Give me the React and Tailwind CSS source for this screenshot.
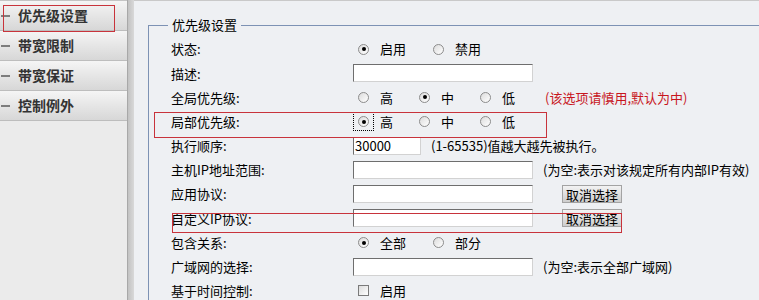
import React from "react";

const font = { fontFamily: '"Noto Sans CJK SC", "Noto Sans", sans-serif' };

const menu = ["优先级设置", "带宽限制", "带宽保证", "控制例外"];

const Radio = ({ checked, focus }) => (
  <span
    className={
      "flex h-[19px] w-[21px] shrink-0 items-center justify-center border border-dotted " +
      (focus ? "border-black" : "border-transparent")
    }
  >
    <span className="flex h-[11px] w-[11px] items-center justify-center rounded-full border border-[#8c8c8c] bg-linear-to-br from-[#dcdcdc] to-white">
      {checked && <span className="h-[4px] w-[4px] rounded-full bg-black" />}
    </span>
  </span>
);

const RadioGroup = ({ options, width }) => (
  <div className="flex items-center">
    {options.map((o) => (
      <div key={o.label} className={"flex items-center gap-[6px] " + width}>
        <Radio checked={o.checked} focus={o.focus} />
        <span>{o.label}</span>
      </div>
    ))}
  </div>
);

const TextInput = ({ w = "w-[180px]", value = "" }) => (
  <div
    className={
      "flex h-[18px] items-center border border-[#6e6e6e] border-r-[#d2d2d2] border-b-[#d2d2d2] bg-white pl-[1px] leading-none " +
      w
    }
  >
    {value}
  </div>
);

const ClearButton = () => (
  <div className="ml-[29px] flex h-[18px] w-[60px] items-center justify-center border border-[#a3a3a3] bg-linear-to-b from-[#f3f3f3] to-[#cdcdcd] leading-none">
    取消选择
  </div>
);

const Row = ({ label, children }) => (
  <div className="flex h-[24.2px] items-center">
    <div className="w-[182px] shrink-0">{label}</div>
    <div className="flex items-center">{children}</div>
  </div>
);

export default function App() {
  return (
    <div
      className="flex h-[300px] w-[759px] overflow-hidden bg-[#eef0f3] text-[13px] text-black"
      style={font}
    >
      {/* left menu */}
      <aside className="relative w-[128px] shrink-0 border-r border-[#a8a8a8] bg-[#ebebeb]">
        <div className="border-t border-[#c4c4c4]">
          {menu.map((m) => (
            <div
              key={m}
              className="flex h-[30px] items-center border-b border-[#bdbdbd] bg-linear-to-b from-[#f5f5f5] to-[#d7d7d7]"
            >
              <span className="ml-[1px] h-[2px] w-[9px] bg-[#7d7d7d]" />
              <span className="ml-[8px] text-[14px] font-bold text-[#333]">{m}</span>
            </div>
          ))}
        </div>
        <div className="absolute left-[3px] top-[5px] h-[27px] w-[112px] border-[1.5px] border-[#c8333b]" />
      </aside>

      <div className="w-[6px] shrink-0 bg-linear-to-r from-[#c2c2c2] to-[#d9d9d9]" />

      {/* content */}
      <main className="relative flex-1 border-t border-[#c9c9c9] pl-[14px] pt-[16px]">
        <fieldset className="w-[640px] border border-[#7d92b4] pb-4 pl-[19px] pt-[4px]">
          <legend className="px-[4px] leading-[16px]">优先级设置</legend>
          <div className="pl-[3px]">
            <Row label="状态:">
              <RadioGroup
                width="w-[75px]"
                options={[{ label: "启用", checked: true }, { label: "禁用" }]}
              />
            </Row>
            <Row label="描述:">
              <TextInput />
            </Row>
            <Row label="全局优先级:">
              <RadioGroup
                width="w-[61px]"
                options={[{ label: "高" }, { label: "中", checked: true }, { label: "低" }]}
              />
              <span className="ml-[9px] text-[#c8161d]">(该选项请慎用,默认为中)</span>
            </Row>
            <Row label="局部优先级:">
              <RadioGroup
                width="w-[61px]"
                options={[{ label: "高", checked: true, focus: true }, { label: "中" }, { label: "低" }]}
              />
            </Row>
            <Row label="执行顺序:">
              <TextInput w="w-[68px]" value="30000" />
              <span className="ml-[10px]">(1-65535)值越大越先被执行。</span>
            </Row>
            <Row label="主机IP地址范围:">
              <TextInput />
              <span className="ml-[10px]">(为空:表示对该规定所有内部IP有效)</span>
            </Row>
            <Row label="应用协议:">
              <TextInput />
              <ClearButton />
            </Row>
            <Row label="自定义IP协议:">
              <TextInput />
              <ClearButton />
            </Row>
            <Row label="包含关系:">
              <RadioGroup
                width="w-[75px]"
                options={[{ label: "全部", checked: true }, { label: "部分" }]}
              />
            </Row>
            <Row label="广域网的选择:">
              <TextInput />
              <span className="ml-[10px]">(为空:表示全部广域网)</span>
            </Row>
            <Row label="基于时间控制:">
              <div className="flex items-center gap-[6px]">
                <span className="flex h-[19px] w-[21px] items-center justify-center">
                  <span className="h-[11px] w-[11px] border border-[#7a7a7a] bg-linear-to-br from-[#dcdcdc] to-white" />
                </span>
                <span>启用</span>
              </div>
            </Row>
          </div>
        </fieldset>

        {/* annotation boxes */}
        <div className="absolute left-[20px] top-[111px] h-[26px] w-[393px] border-[1.5px] border-[#c8333b]" />
        <div className="absolute left-[38px] top-[212px] h-[20px] w-[450px] border-[1.5px] border-[#c8333b]" />
      </main>
    </div>
  );
}
